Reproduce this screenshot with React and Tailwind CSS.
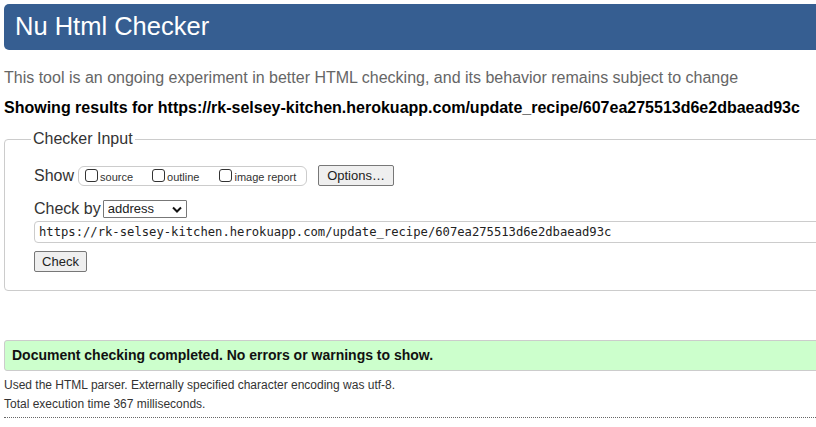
import React from "react";

function Box() {
  return <span className="inline-block w-[13px] h-[13px] border border-[#333] rounded-[3px] bg-white mr-[2px] align-[-2px]" />;
}

export default function App() {
  return (
    <div className="w-[816px] h-[427px] overflow-hidden bg-white text-black" style={{ fontFamily: '"Liberation Sans", Arial, sans-serif' }}>
      <div className="w-[860px] pl-[4px] pt-[4px]">
        <div className="h-[46px] bg-[#365e91] rounded-l-[5px] flex items-center pl-[11px]">
          <h1 className="text-white text-[25.5px] leading-none">Nu Html Checker</h1>
        </div>
        <p className="text-[#666] text-[16px] leading-[18px] mt-[19px]">This tool is an ongoing experiment in better HTML checking, and its behavior remains subject to change</p>
        <p className="font-bold text-[16px] leading-[18px] mt-[12px]">Showing results for https://rk-selsey-kitchen.herokuapp.com/update_recipe/607ea275513d6e2dbaead93c</p>
        <div className="relative mt-[22px] border border-[#ccc] rounded-l-[4px] h-[152px] pl-[29px]">
          <div className="absolute left-[26px] top-[-10px] bg-white px-[2px] text-[16px] leading-[18px] text-[#333]">Checker Input</div>
          <div className="pt-[25px] flex items-center">
            <span className="text-[16px] text-[#333] leading-[18px] mr-[4px]">Show</span>
            <span className="border border-[#ccc] rounded-[6px] h-[20px] w-[229px] flex items-center pl-[6px] text-[11px] text-[#333]">
              <label className="flex items-center"><Box /><span className="mt-[3px]">source</span></label>
              <label className="flex items-center ml-[19px]"><Box /><span className="mt-[3px]">outline</span></label>
              <label className="flex items-center ml-[20px]"><Box /><span className="mt-[3px]">image report</span></label>
            </span>
            <button className="ml-[11px] h-[21px] w-[76px] border border-[#777] rounded-[2px] bg-[#efefef] text-[13px] text-[#222] flex items-center justify-center">Options…</button>
          </div>
          <div className="mt-[14px] flex items-center">
            <span className="text-[16px] text-[#333] leading-[18px] mr-[2px]">Check by</span>
            <span className="h-[18px] w-[84px] border border-[#777] rounded-[1px] flex items-center justify-between px-[4px] text-[13px] text-[#222]">
              <span>address</span>
              <svg width="10" height="7" viewBox="0 0 10 7"><path d="M1 1.5 L5 5.5 L9 1.5" stroke="#111" strokeWidth="2" fill="none" /></svg>
            </span>
          </div>
          <div className="mt-[3px] h-[22px] border border-[#ccc] rounded-l-[4px] flex items-center pl-[4px] text-[#222]" style={{ fontFamily: '"DejaVu Sans Mono", monospace', fontSize: '12.2px' }}>
            https://rk-selsey-kitchen.herokuapp.com/update_recipe/607ea275513d6e2dbaead93c
          </div>
          <button className="mt-[8px] h-[21px] w-[53px] border border-[#777] rounded-[2px] bg-[#efefef] text-[13px] text-[#222] flex items-center justify-center">Check</button>
        </div>
        <div className="mt-[49px] h-[31px] bg-[#ccffcc] border border-[#ccc] rounded-l-[3px] flex items-center pl-[7px]">
          <span className="font-bold text-[14px] text-[#111]">Document checking completed. No errors or warnings to show.</span>
        </div>
        <p className="mt-[5px] text-[12px] leading-[19px] text-[#333]">Used the HTML parser. Externally specified character encoding was utf-8.</p>
        <p className="text-[12px] leading-[19px] text-[#333]">Total execution time 367 milliseconds.</p>
        <div className="mt-[3px] border-t border-dotted border-[#666]" />
      </div>
    </div>
  );
}
